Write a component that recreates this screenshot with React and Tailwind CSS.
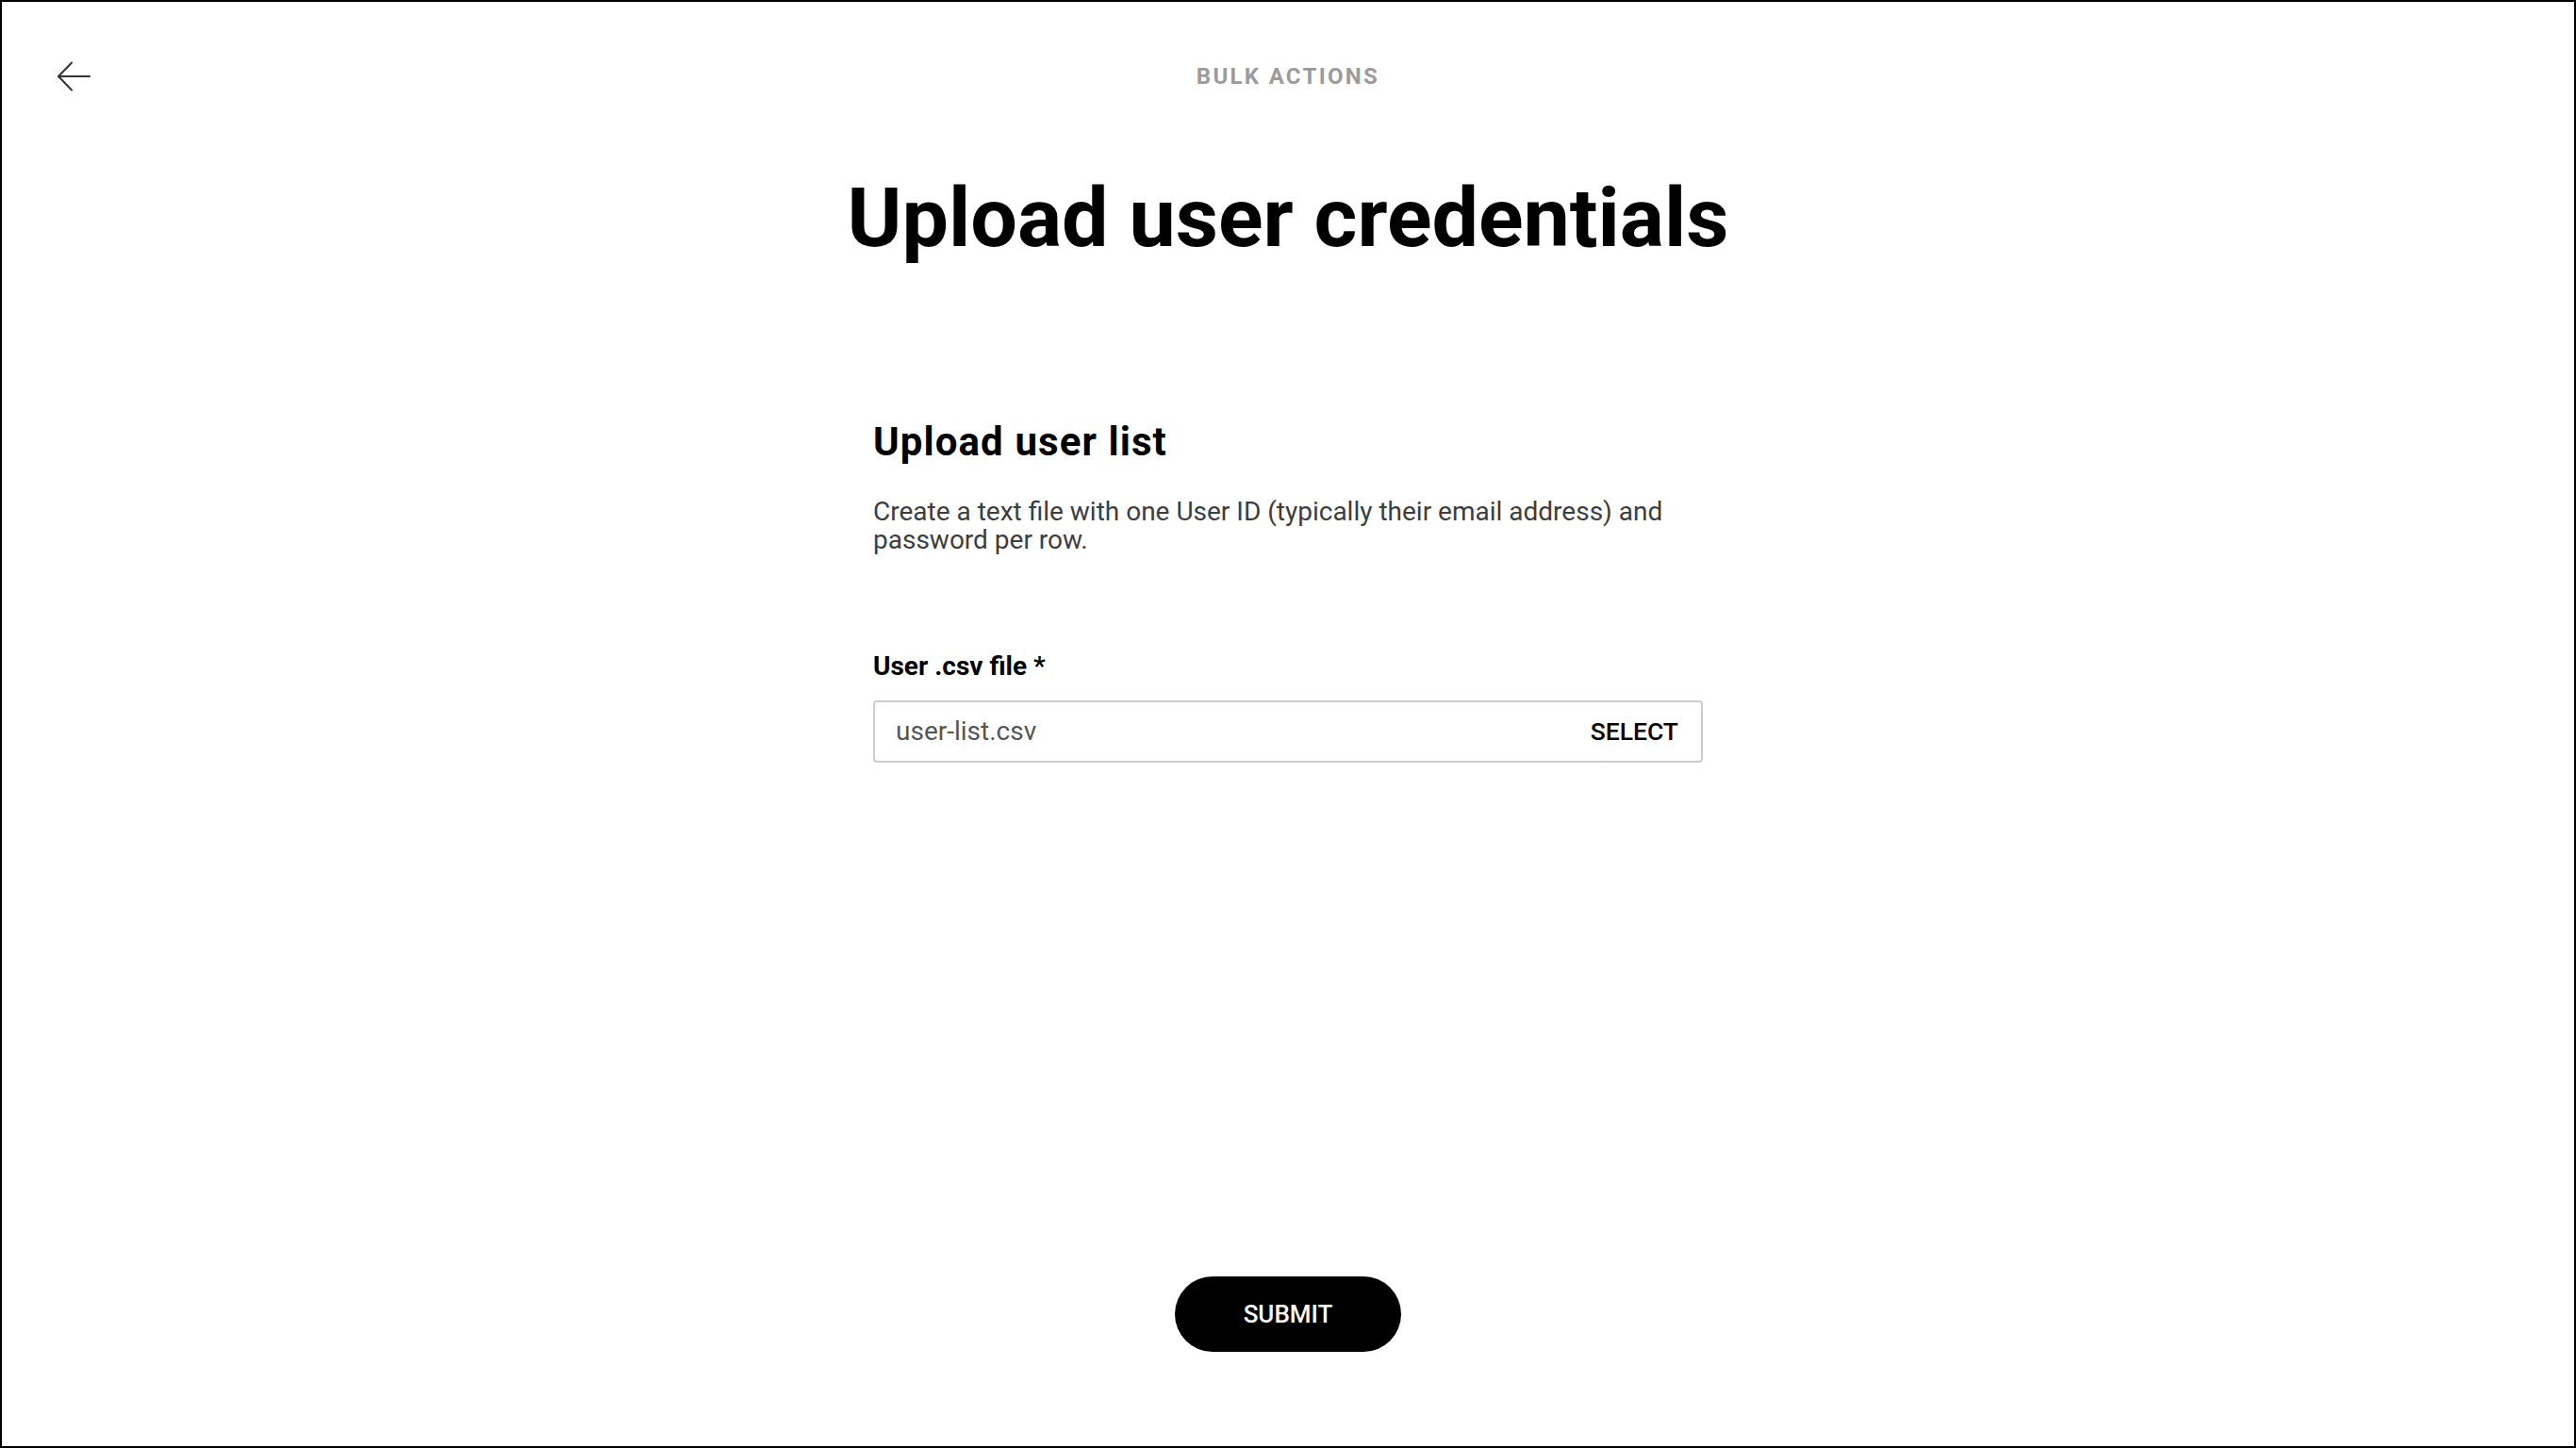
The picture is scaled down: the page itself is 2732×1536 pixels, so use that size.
const BackArrow = () => (
  <svg width="36" height="32" viewBox="0 0 36 32" fill="none" stroke="#333333" strokeWidth="2" strokeLinecap="round" strokeLinejoin="round">
    <path d="M2 16H35" />
    <path d="M16 1.5L2 16L16 30.5" />
  </svg>
);

export default function App() {
  return (
    <div className="box-border flex h-[1536px] w-full flex-col border-2 border-black bg-white font-['Roboto',sans-serif]">
      {/* Top bar */}
      <div className="grid grid-cols-[1fr_auto_1fr] items-center px-[58px] pt-[63px]">
        <button className="flex h-[32px] w-[36px] items-center justify-center" aria-label="Back">
          <BackArrow />
        </button>
        <div className="text-[24px] font-bold leading-[24px] tracking-[2.3px] text-[#9b9b9b]">
          BULK ACTIONS
        </div>
        <div />
      </div>

      <h1 className="mt-[89px] text-center text-[88px] font-bold leading-[90px] text-black">
        Upload user credentials
      </h1>

      <div className="mx-auto mt-[173px] flex w-[880px] flex-col">
        <h2 className="text-[42px] font-bold leading-[40px] tracking-[1.1px] text-black">
          Upload user list
        </h2>
        <p className="mt-[39px] text-[28px] leading-[30px] text-[#3d3d3d]">
          Create a text file with one User ID (typically their email address) and password per row.
        </p>

        <label className="mt-[104px] text-[28px] font-bold leading-[30px] text-black">
          User .csv file *
        </label>
        <div className="mt-[21px] flex h-[66px] items-center justify-between rounded-[4px] border-2 border-[#cccccc] pl-[22px] pr-[24px]">
          <span className="text-[28px] text-[#555555]">user-list.csv</span>
          <button className="text-[26.5px] font-medium text-black">SELECT</button>
        </div>
      </div>

      <div className="mt-auto mb-[100px] flex justify-center">
        <button className="h-[80px] w-[240px] rounded-full bg-black text-[26px] font-medium text-white">
          SUBMIT
        </button>
      </div>
    </div>
  );
}
